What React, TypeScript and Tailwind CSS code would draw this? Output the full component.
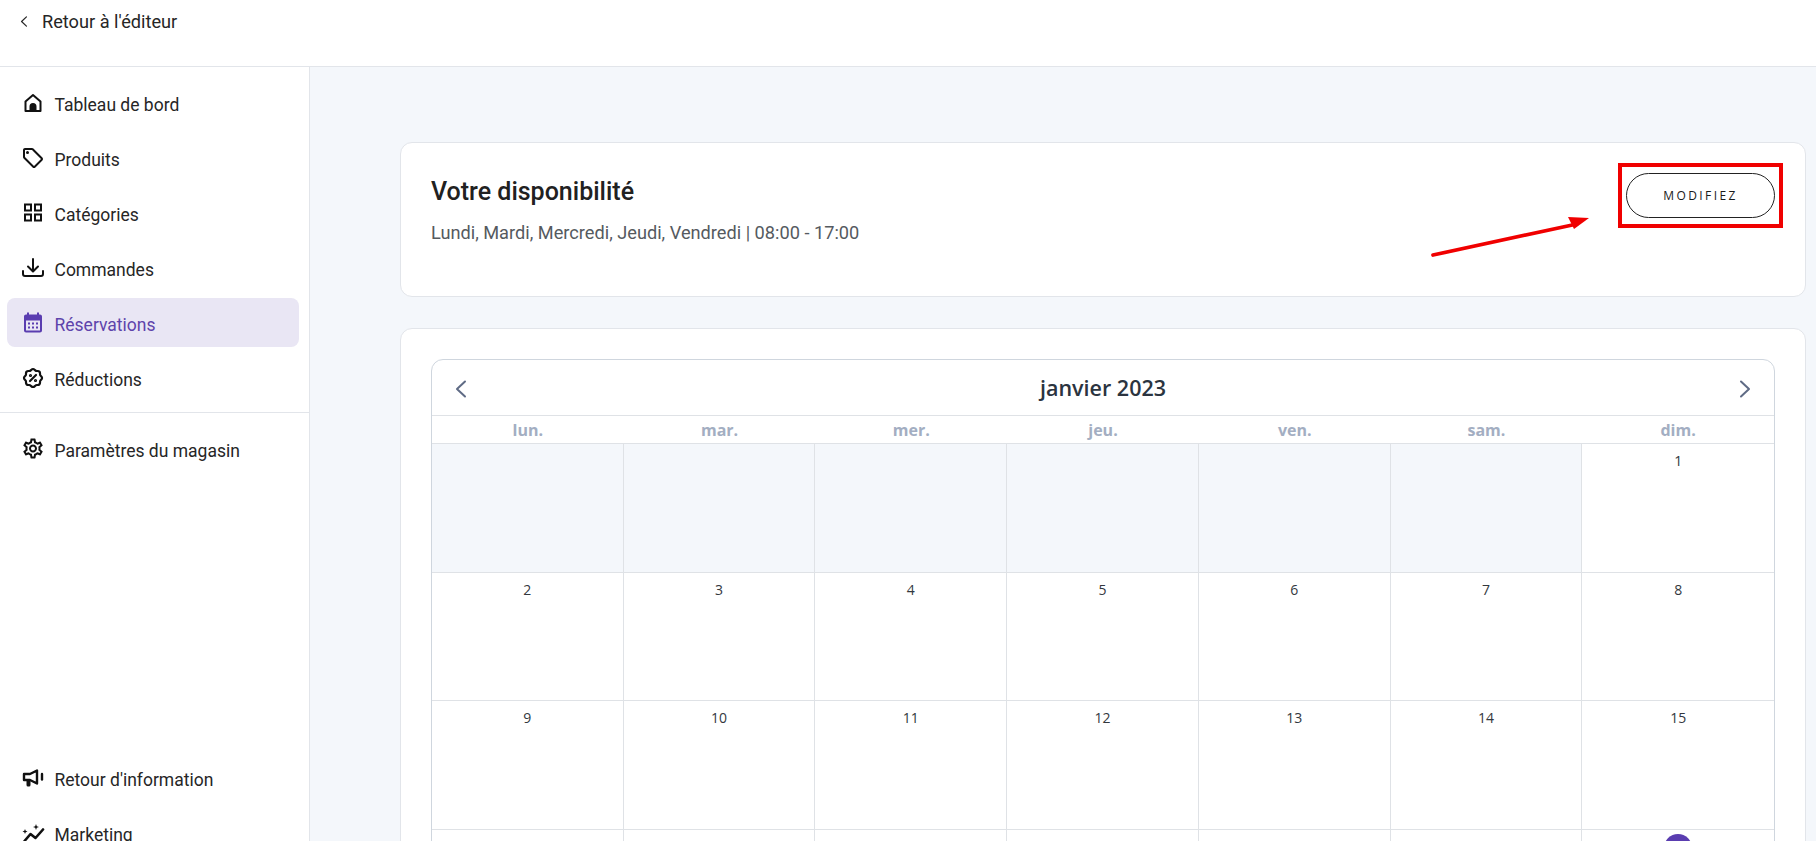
import { ReactNode } from 'react';
import { MdOutlineLocalOffer, MdOutlineGridView, MdCalendarMonth, MdOutlineSettings } from 'react-icons/md';
import { TbRosetteDiscount } from 'react-icons/tb';

const weekDays = ['lun.', 'mar.', 'mer.', 'jeu.', 'ven.', 'sam.', 'dim.'];
const days: (number | null)[] = [
  null, null, null, null, null, null, 1,
  2, 3, 4, 5, 6, 7, 8,
  9, 10, 11, 12, 13, 14, 15,
  16, 17, 18, 19, 20, 21, 22,
];

function HomeIcon() {
  return (
    <svg viewBox="0 0 24 24" className="w-[24px] h-[24px]" fill="none" stroke="currentColor" strokeWidth="2">
      <path d="M4.5 10.5 12 4l7.500 6.500V20h-15z" strokeLinejoin="round" />
      <path d="M8.500 20v-4.500a3.500 3.500 0 0 1 7 0V20z" fill="currentColor" stroke="none" />
    </svg>
  );
}

function DownloadIcon() {
  return (
    <svg viewBox="0 0 24 24" className="w-[24px] h-[24px]" fill="none" stroke="currentColor" strokeWidth="2" strokeLinecap="round" strokeLinejoin="round">
      <path d="M2 15v3a2 2 0 0 0 2 2h16a2 2 0 0 0 2-2v-3" />
      <path d="M12 3v12" />
      <path d="M7 10.500l5 5 5-5" />
    </svg>
  );
}

function MegaphoneIcon() {
  return (
    <svg viewBox="0 0 24 24" className="w-[24px] h-[24px]" fill="none" stroke="currentColor" strokeWidth="2.400" strokeLinejoin="round" strokeLinecap="round">
      <path d="M3 8h6l7-3.500v13L9 14H3z" />
      <path d="M5.500 14h4v5a1.500 1.500 0 0 1-1.500 1.500h-1A1.500 1.500 0 0 1 5.500 19z" fill="currentColor" stroke="none" />
      <path d="M21 8v5.500" />
    </svg>
  );
}

function MarketingIcon() {
  return (
    <svg viewBox="0 0 24 24" className="w-[24px] h-[24px]" fill="none" stroke="currentColor">
      <path d="M3.500 20l6-7 5 4 7.500-8.500" strokeWidth="2.600" strokeLinecap="round" strokeLinejoin="round" />
      <path d="M4 8l.7 1.800 1.800.7-1.800.7L4 13l-.7-1.800-1.800-.7 1.800-.7z" fill="currentColor" stroke="none" />
      <path d="M15 3l.8 2.200 2.200.8-2.200.8L15 9l-.8-2.200L12 6l2.200-.8z" fill="currentColor" stroke="none" />
    </svg>
  );
}

function Chevron({ right, className }: { right?: boolean; className: string }) {
  return (
    <svg viewBox="0 0 12 18" className={className} fill="none" stroke="currentColor" strokeWidth="2" strokeLinecap="round" strokeLinejoin="round">
      <path d={right ? 'M2 1.500 10 9l-8 7.500' : 'M10 1.500 2 9l8 7.500'} />
    </svg>
  );
}

function NavItem({ icon, label, active }: { icon: ReactNode; label: string; active?: boolean }) {
  return (
    <div
      className={`ml-[7px] mr-[10px] mt-[6px] h-[49px] rounded-lg flex items-center pl-[14px] text-[17.5px] ${
        active ? 'bg-[#e9e6f4] text-[#5e43ab]' : 'text-[#262626]'
      }`}
    >
      <span className={`w-[24px] h-[24px] flex items-center justify-center text-[24px] shrink-0 ${active ? 'text-[#5a3db0]' : 'text-[#111111]'}`}>
        {icon}
      </span>
      <span className="ml-[9.500px] mt-[5px]">{label}</span>
    </div>
  );
}

export default function App() {
  return (
    <div className="h-screen overflow-hidden flex flex-col bg-white font-['Roboto',sans-serif]">
      <header className="h-[67px] shrink-0 border-b border-[#e2e5ea] flex items-start pl-[20px] pt-[8px] text-[18.200px] text-[#262626]">
        <Chevron className="w-[8px] h-[11px] mt-[8px]" />
        <span className="ml-[14px]">Retour à l'éditeur</span>
      </header>

      <div className="flex-1 flex min-h-0">
        <aside className="w-[310px] shrink-0 border-r border-[#e2e5ea] flex flex-col">
          <div className="pt-[5px]">
            <NavItem icon={<HomeIcon />} label="Tableau de bord" />
            <NavItem icon={<MdOutlineLocalOffer className="text-[26px]" />} label="Produits" />
            <NavItem icon={<MdOutlineGridView className="text-[25px]" />} label="Catégories" />
            <NavItem icon={<DownloadIcon />} label="Commandes" />
            <NavItem icon={<MdCalendarMonth className="text-[25px]" />} label="Réservations" active />
            <NavItem icon={<TbRosetteDiscount className="text-[28px]" strokeWidth={2.2} />} label="Réductions" />
          </div>
          <div className="mt-[10px] pt-[5px] border-t border-[#e2e5ea]">
            <NavItem icon={<MdOutlineSettings className="text-[25px]" />} label="Paramètres du magasin" />
          </div>
          <div className="mt-auto mb-[-16px]">
            <NavItem icon={<MegaphoneIcon />} label="Retour d'information" />
            <NavItem icon={<MarketingIcon />} label="Marketing" />
          </div>
        </aside>

        <main className="flex-1 min-w-0 bg-[#f4f7fb] pl-[90px] pr-[10px] pt-[75px]">
          <section className="relative h-[155px] bg-white border border-[#e2e5ea] rounded-xl flex justify-between pl-[30px] pr-[30px] pt-[32px]">
            <div>
              <h2 className="text-[25px] leading-[34px] font-medium text-[#212121]">Votre disponibilité</h2>
              <p className="mt-[12px] text-[18.200px] leading-[24px] text-[#555a60]">
                Lundi, Mardi, Mercredi, Jeudi, Vendredi | 08:00 - 17:00
              </p>
            </div>
            <button className="w-[149px] h-[45px] mt-[-2px] rounded-full border border-[#222222] text-[12px] tracking-[0.2em] text-[#1a1a1a] font-['Open_Sans',sans-serif]">
              MODIFIEZ
            </button>
            <div className="absolute left-[1217px] top-[20px] w-[165px] h-[65px] border-[4px] border-[#f00000]" />
            <svg className="absolute left-[1030px] top-[70px] w-[165px] h-[50px]" viewBox="0 0 165 50" fill="none">
              <path d="M2 42 146 11" stroke="#f00000" strokeWidth="3.700" strokeLinecap="round" />
              <path d="M158 5 137 4l6 12z" fill="#f00000" />
            </svg>
          </section>

          <section className="mt-[31px] bg-white border border-[#e2e5ea] rounded-xl pl-[30px] pr-[30px] pt-[30px]">
            <div className="border border-[#cfd6de] rounded-xl font-['Open_Sans',sans-serif]">
              <div className="h-[56px] flex items-center justify-between pl-[23px] pr-[23px] border-b border-[#dfe2e6]">
                <Chevron className="w-[12px] h-[18px] mt-[3px] text-[#5f6b85]" />
                <span className="mt-[2px] text-[21.500px] font-[550] text-[#2b3440]">janvier 2023</span>
                <Chevron right className="w-[12px] h-[18px] mt-[3px] text-[#5f6b85]" />
              </div>
              <div className="grid grid-cols-7 h-[28px] border-b border-[#dfe2e6]">
                {weekDays.map((d) => (
                  <div key={d} className="text-center text-[16px] leading-[28px] font-bold text-[#a3aec2]">
                    {d}
                  </div>
                ))}
              </div>
              <div className="grid grid-cols-7">
                {days.map((d, i) => (
                  <div
                    key={i}
                    className={`h-[128.670px] border-b border-[#dfe2e6] flex justify-center pt-[4px] text-[14px] leading-[26px] text-[#33383e] ${
                      i % 7 !== 6 ? 'border-r' : ''
                    } ${d === null ? 'bg-[#f4f7fb]' : ''}`}
                  >
                    {d === 22 ? (
                      <span className="w-[28px] h-[28px] rounded-full bg-[#5a3db0] text-white text-center">{d}</span>
                    ) : (
                      d
                    )}
                  </div>
                ))}
              </div>
            </div>
          </section>
        </main>
      </div>
    </div>
  );
}
